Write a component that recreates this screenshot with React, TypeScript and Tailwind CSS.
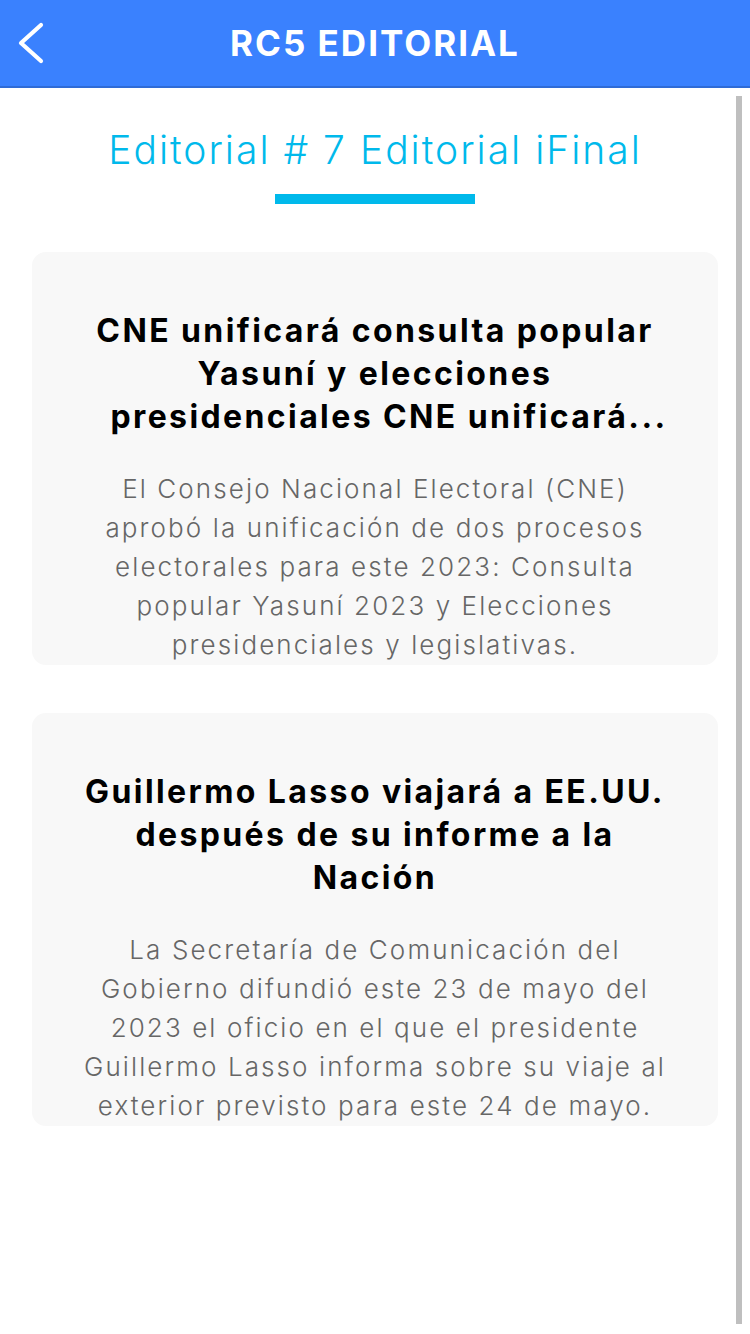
type Editorial = {
  title: React.ReactNode
  body: React.ReactNode
}

const items: Editorial[] = [
  {
    title: (
      <>
        CNE unificará consulta popular
        <br />
        Yasuní y elecciones
        <br />
        <span className="pl-[28px]">presidenciales CNE unificará...</span>
      </>
    ),
    body: (
      <>
        El Consejo Nacional Electoral (CNE)
        <br />
        aprobó la unificación de dos procesos
        <br />
        electorales para este 2023: Consulta
        <br />
        popular Yasuní 2023 y Elecciones
        <br />
        presidenciales y legislativas.
      </>
    ),
  },
  {
    title: (
      <>
        Guillermo Lasso viajará a EE.UU.
        <br />
        después de su informe a la
        <br />
        Nación
      </>
    ),
    body: (
      <>
        La Secretaría de Comunicación del
        <br />
        Gobierno difundió este 23 de mayo del
        <br />
        2023 el oficio en el que el presidente
        <br />
        Guillermo Lasso informa sobre su viaje al
        <br />
        exterior previsto para este 24 de mayo.
      </>
    ),
  },
]

const EditorialCard = ({ title, body }: Editorial) => {
  return (
    <div className="rounded-[14px] bg-[#f8f8f8] pt-[57px] pb-[1px] text-center">
      <h2 className="text-[32px] leading-[43px] font-bold text-black tracking-[2.4px] whitespace-nowrap">
        {title}
      </h2>
      <p className="mt-[31px] text-[26px] leading-[39px] font-light text-[#666666] tracking-[2.1px] whitespace-nowrap">
        {body}
      </p>
    </div>
  )
}

export default function App() {
  return (
    <div className="relative min-h-[1334px] bg-white font-['Inter','Noto_Sans',sans-serif]">
      <header className="relative flex h-[88px] items-center justify-center border-b-2 border-[#2f6bd6] bg-[#3a81fe]">
        <button className="absolute left-0 top-0 h-[86px] w-[64px] text-white">
          <svg viewBox="0 0 64 86" className="h-[86px] w-[64px]">
            <polyline
              points="41,25 21,43 41,61"
              fill="none"
              stroke="currentColor"
              strokeWidth="4.2"
              strokeLinecap="round"
              strokeLinejoin="round"
            />
          </svg>
        </button>
        <h1 className="text-[35px] font-bold text-white tracking-[2px]">
          RC5 EDITORIAL
        </h1>
      </header>

      <main className="flex flex-col items-center px-8">
        <h3 className="mt-[38px] text-[39px] leading-[48px] font-light text-[#00b9eb] tracking-[2px]">
          Editorial # 7 Editorial iFinal
        </h3>
        <div className="mt-[20px] h-[10px] w-[200px] bg-[#00b9eb]" />

        <div className="mt-[48px] flex w-full flex-col gap-[48px]">
          {items.map((item, i) => (
            <EditorialCard key={i} title={item.title} body={item.body} />
          ))}
        </div>
      </main>

      <div className="absolute right-[8px] top-[96px] h-[1228px] w-[6px] bg-[#bfbfbf]" />
    </div>
  )
}
